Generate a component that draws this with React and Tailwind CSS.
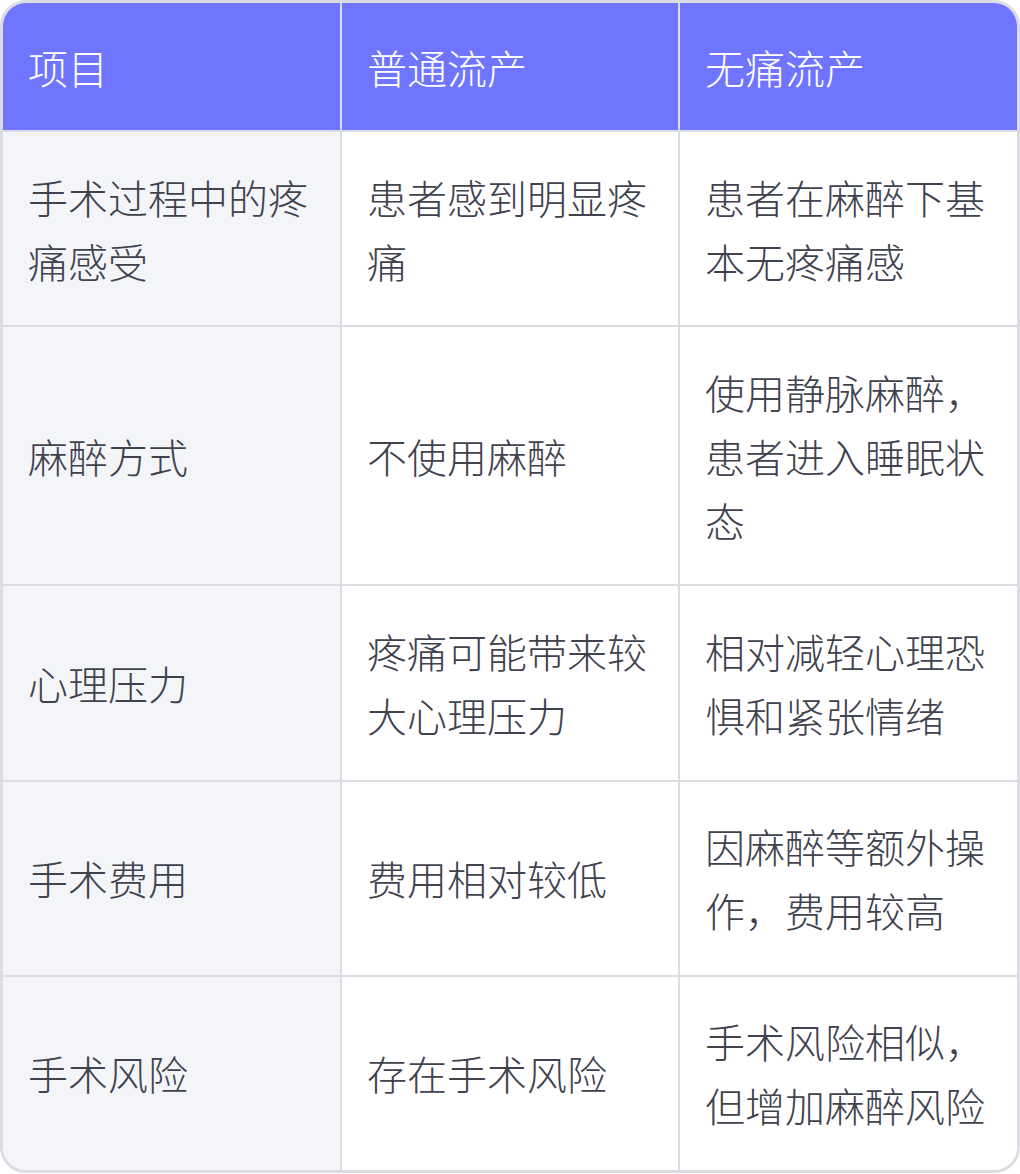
const rows = [
  ['手术过程中的疼痛感受', '患者感到明显疼痛', '患者在麻醉下基本无疼痛感'],
  ['麻醉方式', '不使用麻醉', '使用静脉麻醉，患者进入睡眠状态'],
  ['心理压力', '疼痛可能带来较大心理压力', '相对减轻心理恐惧和紧张情绪'],
  ['手术费用', '费用相对较低', '因麻醉等额外操作，费用较高'],
  ['手术风险', '存在手术风险', '手术风险相似，但增加麻醉风险'],
];

const App = () => {
  return (
    <div className="w-[1020px] bg-white" style={{ fontFamily: '"Noto Sans CJK SC", "Noto Sans", sans-serif' }}>
      <div className="border-[3px] border-[#dcdde2] rounded-[26px] overflow-hidden">
        <table className="w-full table-fixed border-collapse text-[40px] leading-[64px] font-light">
          <thead>
            <tr className="bg-[#7075ff] text-white">
              {['项目', '普通流产', '无痛流产'].map((h, i) => (
                <th
                  key={h}
                  className={`h-[128px] px-[25px] text-left font-light align-middle ${i > 0 ? 'border-l-2 border-[#dcdde2]' : ''}`}
                >
                  {h}
                </th>
              ))}
            </tr>
          </thead>
          <tbody>
            {rows.map((row, r) => (
              <tr key={r} className="border-t-2 border-[#dcdde2] text-[#40424e]">
                {row.map((cell, i) => (
                  <td
                    key={i}
                    className={`px-[25px] py-[32.6px] align-middle ${i === 0 ? 'bg-[#f4f5f9]' : 'bg-white border-l-2 border-[#dcdde2]'}`}
                  >
                    {cell}
                  </td>
                ))}
              </tr>
            ))}
          </tbody>
        </table>
      </div>
    </div>
  );
};

export default App;
